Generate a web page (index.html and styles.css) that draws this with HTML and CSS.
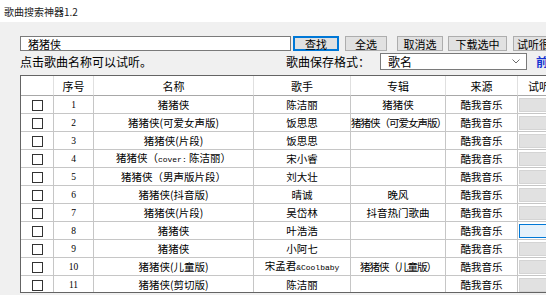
FILE: index.html
```html
<!DOCTYPE html>
<html lang="zh">
<head>
<meta charset="utf-8">
<title>歌曲搜索神器1.2</title>
<link rel="stylesheet" href="styles.css">
</head>
<body>
<div class="title">歌曲搜索神器1.2</div>
<div class="panel">
  <div class="search">
    <input class="query" type="text" value="猪猪侠">
    <button class="btn btn-find">查找</button>
    <button class="btn btn-all">全选</button>
    <button class="btn btn-none">取消选</button>
    <button class="btn btn-dl">下载选中</button>
    <button class="btn btn-listen">试听很久</button>
  </div>
  <div class="opts">
    <span class="hint">点击歌曲名称可以试听。</span>
    <span class="fmt">歌曲保存格式：</span>
    <div class="select"><span>歌名</span><svg class="chev" width="8" height="5" viewBox="0 0 8 5"><path d="M0.5 0.5 L4 4 L7.5 0.5" fill="none" stroke="#6b6b6b" stroke-width="1"/></svg></div>
    <span class="link">前往</span>
  </div>
  <div class="grid">
    <table>
      <colgroup>
        <col class="c-chk"><col class="c-no"><col class="c-name"><col class="c-singer"><col class="c-album"><col class="c-src"><col class="c-play">
      </colgroup>
      <thead>
        <tr><th></th><th>序号</th><th>名称</th><th>歌手</th><th>专辑</th><th>来源</th><th class="th-play">试听</th></tr>
      </thead>
      <tbody>
        <tr><td><span class="box"></span></td><td class="no">1</td><td>猪猪侠</td><td>陈洁丽</td><td>猪猪侠</td><td>酷我音乐</td><td><div class="play"></div></td></tr>
        <tr><td><span class="box"></span></td><td class="no">2</td><td>猪猪侠(可爱女声版)</td><td>饭思思</td><td class="tight">猪猪侠（可爱女声版）</td><td>酷我音乐</td><td><div class="play"></div></td></tr>
        <tr><td><span class="box"></span></td><td class="no">3</td><td>猪猪侠(片段)</td><td>饭思思</td><td></td><td>酷我音乐</td><td><div class="play"></div></td></tr>
        <tr><td><span class="box"></span></td><td class="no">4</td><td>猪猪侠（<span class="lat">cover:</span> 陈洁丽）</td><td>宋小睿</td><td></td><td>酷我音乐</td><td><div class="play"></div></td></tr>
        <tr><td><span class="box"></span></td><td class="no">5</td><td>猪猪侠（男声版片段）</td><td>刘大壮</td><td></td><td>酷我音乐</td><td><div class="play"></div></td></tr>
        <tr><td><span class="box"></span></td><td class="no">6</td><td>猪猪侠(抖音版)</td><td>晴诚</td><td>晚风</td><td>酷我音乐</td><td><div class="play"></div></td></tr>
        <tr><td><span class="box"></span></td><td class="no">7</td><td>猪猪侠(片段)</td><td>吴岱林</td><td>抖音热门歌曲</td><td>酷我音乐</td><td><div class="play"></div></td></tr>
        <tr><td><span class="box"></span></td><td class="no">8</td><td>猪猪侠</td><td>叶浩浩</td><td></td><td>酷我音乐</td><td><div class="play hover"></div></td></tr>
        <tr><td><span class="box"></span></td><td class="no">9</td><td>猪猪侠</td><td>小阿七</td><td></td><td>酷我音乐</td><td><div class="play"></div></td></tr>
        <tr><td><span class="box"></span></td><td class="no">10</td><td>猪猪侠(儿童版)</td><td>宋孟君<span class="lat">&amp;Coolbaby</span></td><td class="tight">猪猪侠（儿童版）</td><td>酷我音乐</td><td><div class="play"></div></td></tr>
        <tr><td><span class="box"></span></td><td class="no">11</td><td>猪猪侠(剪切版)</td><td>陈洁丽</td><td></td><td>酷我音乐</td><td><div class="play"></div></td></tr>
      </tbody>
    </table>
  </div>
</div>
</body>
</html>
```
FILE: styles.css
```css
html, body {
  margin: 0;
  padding: 0;
}
body {
  width: 546px;
  height: 295px;
  overflow: hidden;
  background: #f0f0f0;
  font-family: "Noto Sans CJK SC", "Noto Sans", sans-serif;
  color: #000;
}
.title {
  background: #fff;
  height: 22px;
  box-sizing: border-box;
  padding: 7px 0 0 4px;
  font-size: 10px;
  line-height: 10px;
  color: #222;
}
.panel {
  padding: 14px 0 0 20px;
}
.search {
  display: flex;
  height: 15px;
  white-space: nowrap;
}
.query {
  flex: none;
  width: 271px;
  height: 15px;
  box-sizing: border-box;
  margin: 0;
  padding: 0 0 0 7px;
  border: 1px solid #7a7a7a;
  background: #fff;
  font-family: "Noto Sans CJK SC", sans-serif;
  font-size: 11px;
  line-height: 13px;
  outline: none;
}
.btn {
  flex: none;
  height: 15px;
  box-sizing: border-box;
  margin: 0;
  padding: 0;
  border: 1px solid #adadad;
  background: #e1e1e1;
  font-family: "Noto Sans CJK SC", sans-serif;
  font-size: 11px;
  line-height: 12px;
  color: #000;
  overflow: hidden;
}
.btn-find {
  width: 46px;
  margin-left: 2px;
  border-color: #0078d7;
  box-shadow: inset 0 0 0 1px #0078d7;
}
.btn-all { width: 42px; margin-left: 6px; }
.btn-none { width: 46px; margin-left: 10px; }
.btn-dl { width: 59px; margin-left: 5px; }
.btn-listen { width: 60px; margin-left: 6px; text-align: left; padding-left: 3px; }

.opts {
  display: flex;
  align-items: center;
  height: 17px;
  margin-top: 2px;
  white-space: nowrap;
}
.opts > * { flex: none; }
.hint {
  width: 266px;
  font-size: 12px;
  line-height: 17px;
}
.fmt {
  width: 94px;
  font-size: 12px;
  line-height: 17px;
}
.select {
  width: 147px;
  height: 17px;
  box-sizing: border-box;
  border: 1px solid #7a7a7a;
  background: #fff;
  display: flex;
  align-items: center;
  justify-content: space-between;
  padding: 0 6px 0 7px;
  font-size: 12px;
  line-height: 15px;
}
.chev { display: block; }
.link {
  margin-left: 9px;
  color: #1434d2;
  font-weight: bold;
  font-size: 12px;
  line-height: 17px;
}

.grid {
  margin-top: 5px;
  width: 580px;
  height: 218px;
  box-sizing: border-box;
  border: 1px solid #646464;
  background: #fff;
  overflow: hidden;
}
table {
  border-collapse: separate;
  border-spacing: 0;
  table-layout: fixed;
  width: 577px;
}
.c-chk { width: 33px; }
.c-no { width: 40px; }
.c-name { width: 160px; }
.c-singer { width: 97px; }
.c-album { width: 95px; }
.c-src { width: 72px; }
.c-play { width: 80px; }

th, td {
  box-sizing: border-box;
  padding: 0;
  border-right: 1px solid #c6c6c6;
  border-bottom: 1px solid #c6c6c6;
  text-align: center;
  vertical-align: middle;
  white-space: nowrap;
  overflow: hidden;
  font-weight: normal;
}
th {
  height: 20px;
  font-size: 11px;
  line-height: 14px;
  border-bottom-color: #a8a8a8;
  border-right-color: #e0e0e0;
}
th.th-play {
  text-align: left;
  padding-left: 10px;
}
td {
  height: 18px;
  font-size: 10.5px;
  line-height: 12px;
}
.tight { letter-spacing: -1px; }
.lat {
  font-family: "Liberation Mono", monospace;
  font-size: 8px;
}
td.no {
  font-family: "Liberation Serif", serif;
  font-size: 9.5px;
}
.box {
  display: inline-block;
  width: 11px;
  height: 11px;
  box-sizing: border-box;
  border: 1px solid #333;
  background: #fff;
  vertical-align: middle;
}
.play {
  height: 14px;
  margin: 1px 0 0 1px;
  box-sizing: border-box;
  border: 1px solid #d4d4d4;
  background: #e1e1e1;
}
.play.hover {
  background: #e5f1fb;
  border-color: #0078d7;
}
```
